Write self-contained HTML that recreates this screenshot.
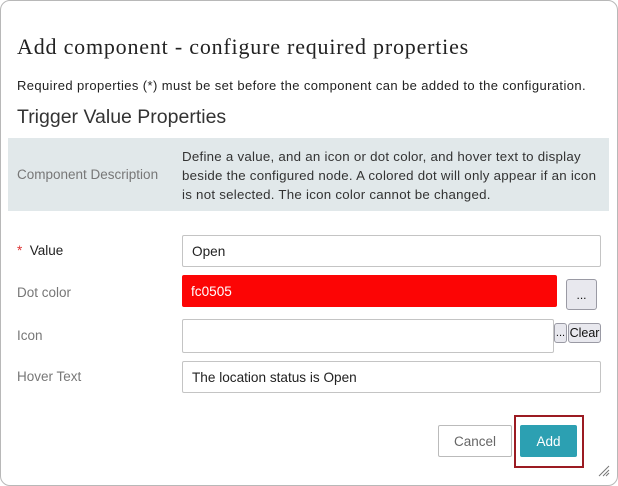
<!DOCTYPE html>
<html><head><meta charset="utf-8"><style>
*{box-sizing:border-box;margin:0;padding:0}
body{width:618px;height:486px;background:#fff;font-family:"Liberation Sans",sans-serif;position:relative;overflow:hidden}
.dlg{position:absolute;left:0;top:0;width:618px;height:486px;border:1px solid #b8b8b8;border-radius:10px;background:#fff}
.a{position:absolute;white-space:nowrap}
.title{left:17px;top:34px;font-family:"Liberation Serif",serif;font-size:22px;letter-spacing:0.8px;color:#222}
.req{left:17px;top:78px;font-size:13px;letter-spacing:0.4px;color:#222}
.h2{left:17px;top:106px;font-size:19.5px;color:#333}
.band{left:8px;top:138px;width:601px;height:73px;background:#e1e8ea}
.lbl{font-size:13.5px;color:#777}
.desc{left:182px;top:147px;font-size:13.3px;letter-spacing:0.25px;color:#333;line-height:19px}
.inp{position:absolute;border:1px solid #c4c4c4;border-radius:2px;background:#fff;font-size:13.6px;color:#222;padding-left:9px;display:flex;align-items:center}
.btn{position:absolute;border:1px solid #9a9aa4;border-radius:3px;background:#e8e8ee;font-size:12px;color:#111;display:flex;align-items:center;justify-content:center}
</style></head><body>
<div class="dlg"></div>
<div class="a title">Add component - configure required properties</div>
<div class="a req">Required properties (*) must be set before the component can be added to the configuration.</div>
<div class="a h2">Trigger Value Properties</div>
<div class="a band"></div>
<div class="a lbl" style="left:17px;top:167px">Component Description</div>
<div class="a desc">Define a value, and an icon or dot color, and hover text to display<br>beside the configured node. A colored dot will only appear if an icon<br>is not selected. The icon color cannot be changed.</div>

<div class="a" style="left:17px;top:243px;font-size:13.5px;color:#222"><span style="color:#d33">*</span>&nbsp; Value</div>
<div class="a lbl" style="left:17px;top:285px">Dot color</div>
<div class="a lbl" style="left:17px;top:328px">Icon</div>
<div class="a lbl" style="left:17px;top:369px">Hover Text</div>

<div class="inp" style="left:182px;top:235px;width:419px;height:32px">Open</div>
<div class="inp" style="left:182px;top:275px;width:375px;height:32px;background:#fc0505;border:none;color:#fff">fc0505</div>
<div class="btn" style="left:566px;top:279px;width:31px;height:31px">...</div>
<div class="inp" style="left:182px;top:319px;width:372px;height:34px"></div>
<div class="btn" style="left:554px;top:323px;width:13px;height:20px;font-size:11px">...</div>
<div class="btn" style="left:568px;top:323px;width:33px;height:20px;font-size:12.5px">Clear</div>
<div class="inp" style="left:182px;top:361px;width:419px;height:32px">The location status is Open</div>

<div class="a" style="left:438px;top:425px;width:74px;height:32px;border:1px solid #bbb;border-radius:2px;font-size:13.5px;color:#666;display:flex;align-items:center;justify-content:center">Cancel</div>
<div class="a" style="left:514px;top:415px;width:70px;height:53px;border:2px solid #9b1b22"></div>
<div class="a" style="left:520px;top:425px;width:57px;height:32px;background:#2ca0b2;border-radius:2px;font-size:13.5px;color:#fff;display:flex;align-items:center;justify-content:center">Add</div>
<svg class="a" style="left:597px;top:464px" width="14" height="14"><path d="M2 12L12 2M6 12L12 6M9 12L12 9" stroke="#777" stroke-width="1"/></svg>
</body></html>
